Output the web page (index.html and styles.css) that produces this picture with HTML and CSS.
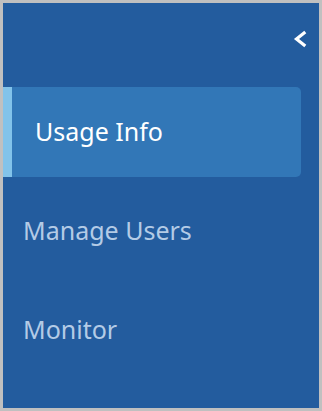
FILE: index.html
```html
<!DOCTYPE html>
<html lang="en">
<head>
    <meta charset="UTF-8">
    <meta name="viewport" content="width=device-width, initial-scale=1.0">
    <title>Sidebar</title>
    <link rel="stylesheet" href="styles.css">
</head>
<body>
    <nav class="sidebar">
        <div class="sidebar-header">
            <button class="collapse-btn" aria-label="Collapse">
                <svg width="14" height="18" viewBox="0 0 14 18">
                    <polyline points="12.3,2 3.5,9 12.3,16" fill="none" stroke="#fff" stroke-width="3.2" stroke-linecap="butt" stroke-linejoin="miter"/>
                </svg>
            </button>
        </div>

        <ul class="menu">
            <li class="menu-item active">Usage Info</li>
            <li class="menu-item">Manage Users</li>
            <li class="menu-item">Monitor</li>
        </ul>
    </nav>
</body>
</html>
```

FILE: styles.css
```css
body {
  margin: 0;
  padding: 0;
  font-family: "Noto Sans", "Open Sans", sans-serif;
}

/* Sidebar panel with grey frame */
.sidebar {
  width: 322px;
  height: 411px;
  box-sizing: border-box;
  border: 3px solid #c0c0c0;
  background: #235c9e;
}

.sidebar-header {
  height: 84px;
  display: flex;
  justify-content: flex-end;
  align-items: flex-start;
  padding: 27px 12px 0 0;
  box-sizing: border-box;
}
.collapse-btn {
  background: none;
  border: none;
  padding: 0;
  cursor: pointer;
  display: flex;
}

.menu {
  list-style: none;
  margin: 0;
  padding: 0;
  display: flex;
  flex-direction: column;
  gap: 9px;
}
.menu-item {
  height: 90px;
  box-sizing: border-box;
  display: flex;
  align-items: center;
  padding: 0 0 2px 20px;
  font-size: 25px;
  color: #b3cbe6;
}
.menu-item.active {
  width: 298px;
  background: #3277b7;
  border-left: 9px solid #82c3ea;
  border-radius: 0 5px 5px 0;
  padding-left: 23px;
  color: #fff;
}
```
